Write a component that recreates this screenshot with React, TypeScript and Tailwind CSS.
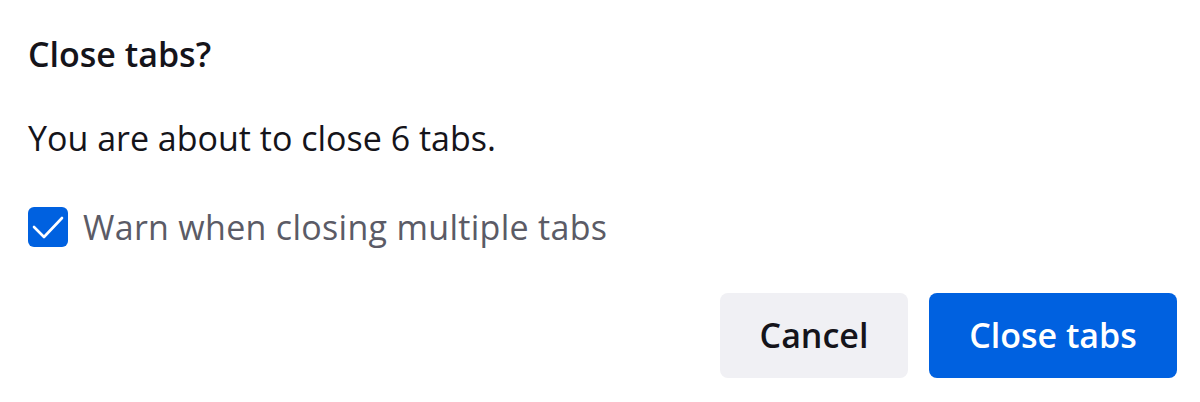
export default function App() {
  return (
    <div className="h-[402px] w-[1200px] bg-white pl-[28px] pr-[23px] pt-[30px] font-['Open_Sans',sans-serif] text-[#15141a]">
      <h1 className="text-[34px] font-semibold leading-[48px]">Close tabs?</h1>

      <p className="mt-[36px] text-[34px] leading-[48px]">You are about to close 6 tabs.</p>

      <label className="mt-[45px] flex h-[40px] items-center gap-[15px]">
        <span className="flex h-[40px] w-[40px] items-center justify-center rounded-[6px] bg-[#0061e0]">
          <svg width="40" height="40" viewBox="0 0 40 40" fill="none">
            <polyline
              points="6,20 16,30 34,11"
              stroke="white"
              strokeWidth="2.6"
              strokeLinecap="round"
              strokeLinejoin="round"
            />
          </svg>
        </span>
        <span className="text-[34px] leading-[48px] tracking-[0.3px] text-[#5b5b66]">
          Warn when closing multiple tabs
        </span>
      </label>

      <div className="mt-[46px] flex justify-end gap-[21px]">
        <button className="h-[85px] w-[188px] rounded-[8px] bg-[#f0f0f4] text-[34px] font-semibold text-[#15141a]">
          Cancel
        </button>
        <button className="h-[85px] w-[248px] rounded-[8px] bg-[#0061e0] text-[34px] font-semibold text-white">
          Close tabs
        </button>
      </div>
    </div>
  );
}
